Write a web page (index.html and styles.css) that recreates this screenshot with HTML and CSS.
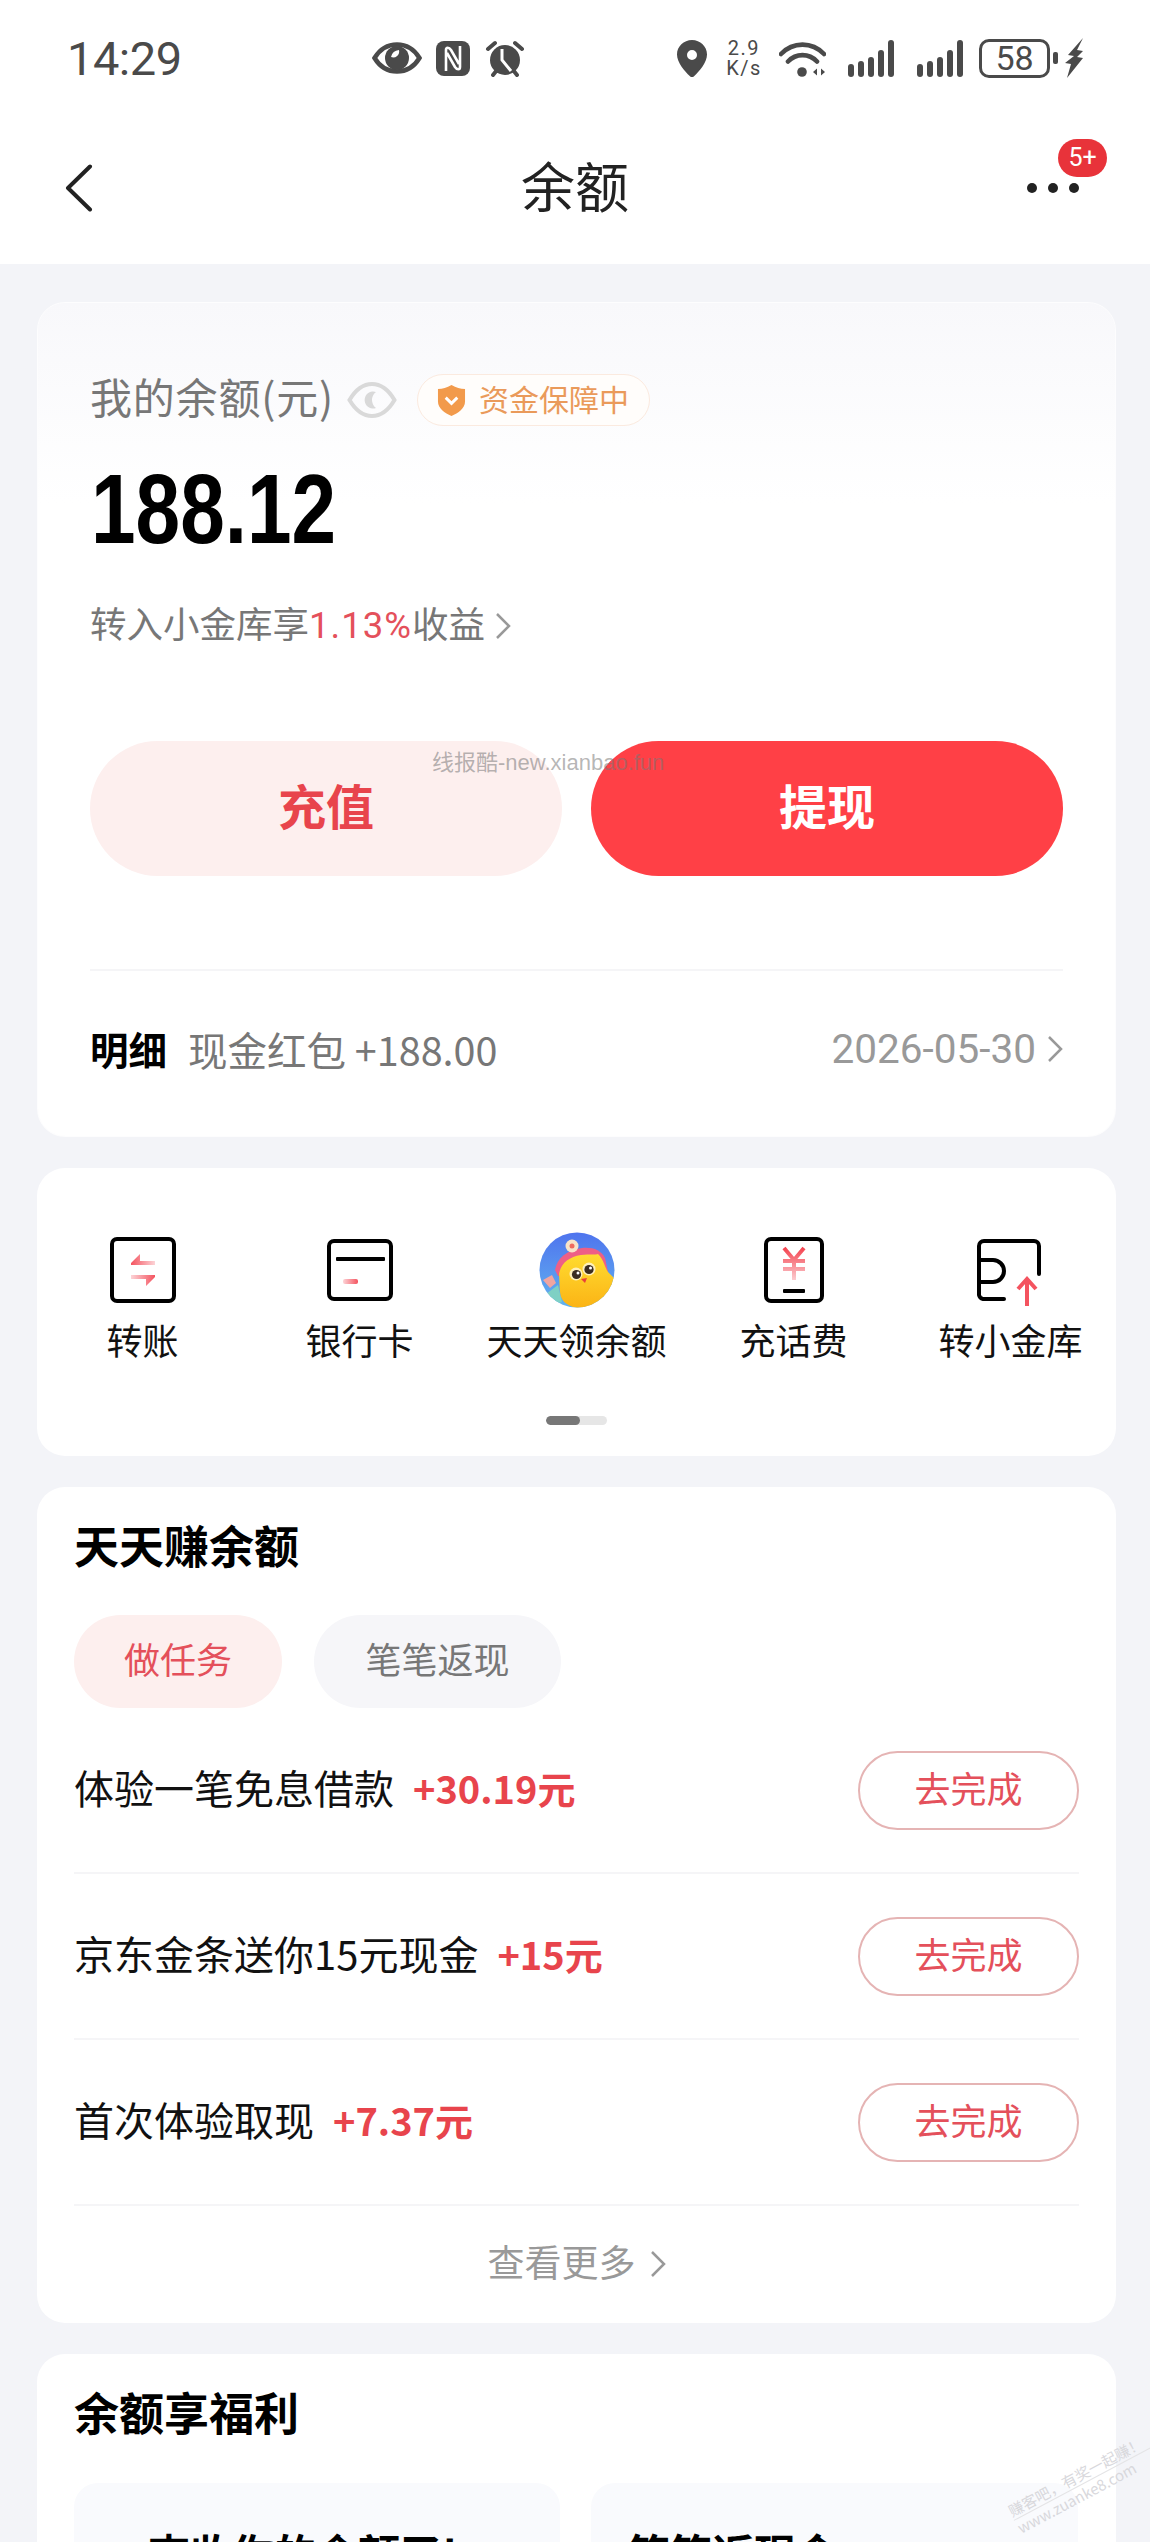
FILE: index.html
```html
<!DOCTYPE html>
<html lang="zh-CN">
<head>
<meta charset="utf-8">
<title>余额</title>
<link rel="stylesheet" href="styles.css">
</head>
<body>
<div class="page">
  <header class="top">
    <div class="status">
      <span class="time">14:29</span>
      <div class="st-left">
        <svg class="i-eye" viewBox="0 0 50 32"><path d="M2.5 16C8 7 15.5 2.5 25 2.5S42 7 47.5 16C42 25 34.500 29.500 25 29.500S8 25 2.500 16Z" fill="none" stroke="#4a4a4a" stroke-width="4.500"/><circle cx="25" cy="16" r="12" fill="#4a4a4a"/><path d="M19 15a6 6 0 0 0 8 -7a9 9 0 0 0 -8 7Z" fill="#fff"/></svg>
        <svg class="i-nfc" viewBox="0 0 34 35"><rect width="34" height="35" rx="8" fill="#4a4a4a"/><path d="M10 30V9c0-3 3-3 5 0l8 14M24 5v21c0 3-3 3-5 0l-8-14" fill="none" stroke="#fff" stroke-width="2.600"/></svg>
        <svg class="i-alarm" viewBox="0 0 40 37"><path d="M3 9l7-6M37 9l-7-6M8 35l4-5M32 35l-4-5" stroke="#4a4a4a" stroke-width="4" stroke-linecap="round"/><circle cx="20" cy="20" r="15" fill="#4a4a4a"/><path d="M17 9v11l9 11" fill="none" stroke="#fff" stroke-width="3"/></svg>
      </div>
      <div class="st-right">
        <svg class="i-pin" viewBox="0 0 30 37"><path fill-rule="evenodd" d="M15 0c8.300 0 15 6.500 15 14.500 0 8-7.500 16.500-13 21.800a3 3 0 0 1-4 0C7.500 31 0 22.500 0 14.500 0 6.500 6.700 0 15 0Zm0 10a5 5 0 1 0 0 10 5 5 0 0 0 0-10Z" fill="#4a4a4a"/></svg>
        <div class="speed"><span>2.9</span><span>K/s</span></div>
        <svg class="i-wifi" viewBox="0 0 47 37"><path d="M2 14C14 1.500 33 1.500 45 14M9 21.500C17 13 30 13 38 21.500" fill="none" stroke="#4a4a4a" stroke-width="4.600" stroke-linecap="round"/><circle cx="23" cy="32" r="4.800" fill="#4a4a4a"/><path d="M34 32l4-3.500v7ZM42 28.500l4 3.500-4 3.500Z" fill="#4a4a4a"/></svg>
        <svg class="i-sig" viewBox="0 0 47 37"><g fill="#4a4a4a"><rect x="0" y="24" width="6" height="13" rx="3"/><rect x="10" y="21" width="6" height="16" rx="3"/><rect x="20" y="17" width="6" height="20" rx="3"/><rect x="30" y="10" width="6" height="27" rx="3"/><rect x="40" y="0" width="6" height="37" rx="3"/></g></svg>
        <svg class="i-sig i-sig2" viewBox="0 0 47 37"><g fill="#4a4a4a"><rect x="0" y="24" width="6" height="13" rx="3"/><rect x="10" y="21" width="6" height="16" rx="3"/><rect x="20" y="17" width="6" height="20" rx="3"/><rect x="30" y="10" width="6" height="27" rx="3"/><rect x="40" y="0" width="6" height="37" rx="3"/></g></svg>
        <div class="batt">58</div>
        <span class="nub"></span>
        <svg class="i-bolt" viewBox="0 0 18 40"><path d="M18 0L3 17l6 1-9 7 6 1L2 40 18 20l-6-1 6-6-6-1Z" fill="#4a4a4a"/></svg>
      </div>
    </div>
    <nav class="nav">
      <svg class="i-back" viewBox="0 0 28 48"><path d="M25 2.500L3 24l22 21.500" fill="none" stroke="#222" stroke-width="4" stroke-linecap="round" stroke-linejoin="round"/></svg>
      <h1 class="nav-title">余额</h1>
      <div class="more">
        <span class="dot"></span><span class="dot"></span><span class="dot"></span>
        <span class="badge">5+</span>
      </div>
    </nav>
  </header>

  <main class="main">
    <section class="card balance">
      <div class="bal-head">
        <span class="bal-label">我的余额(元)</span>
        <svg class="i-seye" viewBox="0 0 50 38"><path d="M2.500 19C9 8 16 3 25 3s16 5 22.500 16C41 30 34 35 25 35S9 30 2.500 19Z" fill="none" stroke="#d9d9d9" stroke-width="4"/><path d="M29 11a8.500 8.500 0 1 0 0 16 10 10 0 0 1 0-16Z" fill="#d9d9d9"/></svg>
        <div class="safe">
          <svg class="i-shield" viewBox="0 0 30 32"><path d="M1 4c5 0 9-1 14-4 5 3 9 4 14 4v13c0 7-7 12-14 15C8 29 1 24 1 17Z" fill="#f29a4b"/><path d="M9 13l6 6 6-6" fill="none" stroke="#fff" stroke-width="3"/></svg>
          <span>资金保障中</span>
        </div>
      </div>
      <div class="amount">188.12</div>
      <div class="promo"><span class="promo-t">转入小金库享<em>1.13%</em>收益</span><svg class="i-chev" viewBox="0 0 16 28"><path d="M2 2l12 12L2 26" fill="none" stroke="#999" stroke-width="2.500"/></svg></div>
      <div class="actions">
        <button class="act act-light">充值</button>
        <button class="act act-red">提现</button>
      </div>
      <div class="detail">
        <div class="detail-l"><b>明细</b><span>现金红包 +188.00</span></div>
        <div class="detail-r">2026-05-30<svg class="i-chev" viewBox="0 0 16 28"><path d="M2 2l12 12L2 26" fill="none" stroke="#999" stroke-width="2.500"/></svg></div>
      </div>
    </section>

    <section class="card tools">
      <div class="tool-row">
        <div class="tool">
          <svg class="t-ic" viewBox="0 0 80 80"><defs><linearGradient id="ga" x1="1" x2="0" y1="0" y2="0"><stop offset="0" stop-color="#f4535f" stop-opacity=".25"/><stop offset="1" stop-color="#f4535f"/></linearGradient><linearGradient id="gb" x1="0" x2="1" y1="0" y2="0"><stop offset="0" stop-color="#f4535f" stop-opacity=".25"/><stop offset="1" stop-color="#f4535f"/></linearGradient></defs><rect x="9" y="9" width="62" height="62" rx="5" fill="none" stroke="#000" stroke-width="4"/><path d="M28 33l9-9v7h15v4H28Z" fill="url(#ga)"/><path d="M52 47l-9 9v-7H28v-4h24Z" fill="url(#gb)"/></svg>
          <span>转账</span>
        </div>
        <div class="tool">
          <svg class="t-ic" viewBox="0 0 80 80"><rect x="9" y="11" width="62" height="58" rx="5" fill="none" stroke="#000" stroke-width="4"/><rect x="16" y="27" width="49" height="4" rx="1" fill="#000"/><rect x="23" y="49" width="15" height="5" rx="2" fill="url(#gb)"/></svg>
          <span>银行卡</span>
        </div>
        <div class="tool">
          <svg class="t-ic" viewBox="0 0 80 80"><defs><linearGradient id="gd" x1="0" x2="0" y1="0" y2="1"><stop offset="0" stop-color="#4f74ee"/><stop offset="1" stop-color="#62b4ef"/></linearGradient><linearGradient id="gy" x1="0" x2="0" y1="0" y2="1"><stop offset="0" stop-color="#ffdc30"/><stop offset="1" stop-color="#fbb315"/></linearGradient><clipPath id="gc"><circle cx="40" cy="40" r="37.500"/></clipPath></defs><circle cx="40" cy="40" r="37.500" fill="url(#gd)"/><g clip-path="url(#gc)"><path d="M6 50l9-5 4 8-6 5Z" fill="#f1a5a0"/><path d="M9 64l12-9 4 17-8 2Z" fill="#7ed0c4"/><path d="M18 40C20 28 30 20 45 18c11-1 19 2 23 10l3 14-50 4Z" fill="#ee5f86"/><circle cx="35" cy="16" r="6.500" fill="#f8e3c8"/><circle cx="35" cy="16" r="2.500" fill="#ef6a5e"/><path d="M22 44C24 33 32 27 44 25c9-1 15 0 17-1 6 6 7 14 10 18l8 8-14 21c-6 5-15 8-24 7-7-1-13-4-16-9-3-6-2-13-3-25Z" fill="url(#gy)"/><circle cx="39" cy="44" r="6.500" fill="#fff0b8"/><circle cx="39.500" cy="44.500" r="4.600" fill="#3b2c22"/><circle cx="52" cy="39" r="6.500" fill="#fff0b8"/><circle cx="52" cy="39.500" r="4.600" fill="#3b2c22"/><circle cx="41" cy="43" r="1.500" fill="#fff"/><circle cx="53.500" cy="38" r="1.500" fill="#fff"/><path d="M44 49l6-1-2 5Z" fill="#e8413a"/></g></svg>
          <span>天天领余额</span>
        </div>
        <div class="tool">
          <svg class="t-ic" viewBox="0 0 80 80"><defs><linearGradient id="gv" x1="0" x2="0" y1="0" y2="1"><stop offset="0" stop-color="#f4434f"/><stop offset="1" stop-color="#f4535f" stop-opacity=".3"/></linearGradient></defs><rect x="12" y="9" width="56" height="62" rx="5" fill="none" stroke="#000" stroke-width="4"/><path d="M30 18l10 12 10-12M29 31h22M29 39h22M40 30v20" fill="none" stroke="url(#gv)" stroke-width="4"/><rect x="29" y="59" width="22" height="4" rx="1" fill="#000"/></svg>
          <span>充话费</span>
        </div>
        <div class="tool">
          <svg class="t-ic" viewBox="0 0 80 80"><path d="M33 69H12a5 5 0 0 1-4-4V16a5 5 0 0 1 5-5h50a5 5 0 0 1 5 5v28" fill="none" stroke="#000" stroke-width="4" stroke-linecap="round"/><path d="M8 30h14a11 11 0 0 1 0 22H8" fill="none" stroke="#000" stroke-width="4"/><path d="M56 76V50M47 59l9-10 9 10" fill="none" stroke="#f4535f" stroke-width="4"/></svg>
          <span>转小金库</span>
        </div>
      </div>
      <div class="pager"><span></span></div>
    </section>

    <section class="card earn">
      <h2 class="sec-title">天天赚余额</h2>
      <div class="tabs">
        <span class="tab tab-on">做任务</span>
        <span class="tab tab-off">笔笔返现</span>
      </div>
      <div class="task"><div class="task-l">体验一笔免息借款<b>+30.19元</b></div><span class="go">去完成</span></div>
      <div class="task"><div class="task-l">京东金条送你15元现金<b>+15元</b></div><span class="go">去完成</span></div>
      <div class="task"><div class="task-l">首次体验取现<b>+7.37元</b></div><span class="go">去完成</span></div>
      <div class="see-more"><span>查看更多</span><svg class="i-chev" viewBox="0 0 16 28"><path d="M2 2l12 12L2 26" fill="none" stroke="#999" stroke-width="2.500"/></svg></div>
    </section>

    <section class="card perks">
      <h2 class="sec-title">余额享福利</h2>
      <div class="perk-grid">
        <div class="perk perk-a">查收你的余额了!</div>
        <div class="perk perk-b">笔笔返现金</div>
      </div>
    </section>
  </main>

  <div class="wm-a">线报酷-new.xianbao.fun</div>
  <div class="wm-b"><span>赚客吧，有奖一起赚！</span><i></i><span>www.zuanke8.com</span></div>
</div>
</body>
</html>
```
FILE: styles.css
```css
* { box-sizing: border-box; }
html, body { margin: 0; padding: 0; }
body {
  font-family: "Noto Sans CJK SC", "Noto Sans", sans-serif;
  background: #f3f4f8;
  color: #000;
}
.page { position: relative; width: 1150px; height: 2542px; overflow: hidden; }

/* header */
.top { background: #fff; height: 264px; }
.status { height: 116px; display: flex; align-items: center; padding-left: 67px; color: #4a4a4a; }
.time { font-family: Roboto, sans-serif; font-size: 47px; width: 115px; letter-spacing: -.5px; color: #4a4a4a; white-space: nowrap; }
.st-left { display: flex; align-items: center; margin-left: 190px; }
.i-eye { width: 50px; height: 32px; }
.i-nfc { width: 34px; height: 35px; margin-left: 14px; }
.i-alarm { width: 40px; height: 37px; margin-left: 15px; }
.st-right { display: flex; align-items: center; margin-left: 152px; }
.i-pin { width: 30px; height: 37px; }
.speed { display: flex; flex-direction: column; width: 38px; margin-left: 18px; font-family: Roboto, sans-serif; font-size: 20px; letter-spacing: 1.500px; line-height: 20px; align-items: center; }
.i-wifi { width: 47px; height: 37px; margin-left: 16px; }
.i-sig { width: 47px; height: 37px; margin-left: 22px; }
.i-sig2 { margin-left: 22px; }
.batt { width: 71px; height: 39px; margin-left: 15px; border: 3px solid #4a4a4a; border-radius: 10px; font-family: Roboto, sans-serif; font-size: 34px; line-height: 33px; text-align: center; }
.nub { width: 5px; height: 12px; margin-left: 3px; background: #4a4a4a; border-radius: 2px; }
.i-bolt { width: 18px; height: 40px; margin-left: 7px; }

.nav { position: relative; height: 148px; display: flex; align-items: center; justify-content: space-between; padding: 0 71px 4px 65px; }
.i-back { width: 28px; height: 48px; }
.nav-title { margin: 0; font-size: 54px; line-height: 60px; font-weight: 400; color: #222; position: absolute; left: 0; right: 0; text-align: center; top: 39px; }
.more { position: relative; display: flex; gap: 11px; align-self: center; }
.dot { width: 10px; height: 10px; border-radius: 50%; background: #222; }
.badge { position: absolute; right: -28px; top: -44px; width: 49px; height: 38px; border-radius: 19px; background: #e8333a; color: #fff; font-family: Roboto, sans-serif; font-size: 25px; line-height: 38px; text-align: center; }

/* cards */
.main { padding: 38px 34px 0 37px; display: flex; flex-direction: column; gap: 31px; }
.card { width: 1079px; border-radius: 28px; background: #fff; }

.balance { height: 835px; padding: 71px 52px 0 52px; background: linear-gradient(#f8f8fb, #fff 200px); border: 1px solid #fdfdfe; }
.bal-head { display: flex; align-items: center; height: 52px; }
.bal-label { font-size: 42px; letter-spacing: .8px; line-height: 44px; padding-bottom: 8px; color: #777; white-space: nowrap; }
.i-seye { width: 50px; height: 38px; margin-left: 13px; }
.safe { display: flex; align-items: center; width: 233px; height: 52px; margin-left: 20px; padding-left: 19px; border: 1.5px solid #fbeadf; border-radius: 26px; background: #fffdfb; color: #ea9a5a; font-size: 30px; white-space: nowrap; }
.safe span { line-height: 40px; padding-bottom: 4px; }
.i-shield { width: 29px; height: 31px; margin-right: 13px; }
.amount { margin-top: 33px; height: 100px; font-family: "Liberation Sans", Arial, sans-serif; font-weight: 700; font-size: 99px; line-height: 100px; color: #000; transform: scaleX(.81); transform-origin: 5px 0; }
.promo { display: flex; align-items: center; margin-top: 42px; height: 50px; font-size: 36.500px; color: #777; white-space: nowrap; }
.promo-t { line-height: 46px; padding-bottom: 3px; }
.promo em { font-style: normal; font-family: Roboto, sans-serif; color: #e4505b; letter-spacing: 1px; }
.i-chev { width: 16px; height: 28px; margin-left: 10px; }
.actions { display: flex; gap: 29px; margin-top: 90px; }
.act { flex: 1; height: 135px; border: 0; border-radius: 68px; padding: 0 0 10px; font-family: inherit; font-size: 48px; font-weight: 700; }
.act-light { background: #fdefee; color: #e8444c; }
.act-red { background: #ff4046; color: #fff; }
.detail { display: flex; justify-content: space-between; align-items: center; margin-top: 93px; padding-top: 50px; border-top: 2px solid #f5f5f7; height: 112px; }
.detail-l { display: flex; align-items: center; height: 60px; padding-bottom: 6px; }
.detail-l b { font-size: 38.500px; font-weight: 700; color: #000; }
.detail-l span { margin-left: 21px; font-size: 39.500px; color: #777; white-space: nowrap; }
.detail-r { display: flex; align-items: center; height: 60px; font-size: 40.500px; font-family: Roboto, sans-serif; color: #999; padding-bottom: 4px; white-space: nowrap; }
.detail-r .i-chev { margin-left: 11px; }

.tools { height: 288px; padding-top: 62px; overflow: hidden; }
.tool-row { display: grid; grid-template-columns: repeat(5, 217px); justify-content: center; }
.tool { display: flex; flex-direction: column; align-items: center; }
.tool span { margin-top: 4px; padding-bottom: 3px; font-size: 36px; line-height: 50px; color: #111; white-space: nowrap; }
.t-ic { width: 80px; height: 80px; }
.pager { width: 61px; height: 9px; margin: 49px auto 0; background: #e6e6e6; border-radius: 5px; overflow: hidden; }
.pager span { display: block; width: 34px; height: 9px; background: #777; border-radius: 5px; }

.earn { height: 836px; padding: 28px 37px 0; }
.sec-title { margin: 0; font-size: 45px; line-height: 60px; font-weight: 700; color: #000; }
.tabs { display: flex; gap: 32px; margin-top: 40px; }
.tab { height: 93px; border-radius: 47px; font-size: 36px; line-height: 87px; text-align: center; }
.tab-on { width: 208px; background: #fdefee; color: #e4505b; }
.tab-off { width: 247px; background: #f6f6f9; color: #777; }
.task { display: flex; justify-content: space-between; align-items: center; height: 166px; padding-top: 1px; border-bottom: 2px solid #f5f5f7; }
.task-l { font-size: 40px; color: #111; white-space: nowrap; padding-bottom: 8px; }
.task-l b { margin-left: 19px; color: #e8444c; font-weight: 700; font-size: 38px; }
.go { width: 221px; height: 79px; border: 2px solid #e5b4b4; border-radius: 40px; font-size: 36px; line-height: 68px; text-align: center; color: #e4505b; }
.see-more { display: flex; justify-content: center; align-items: center; height: 117px; font-size: 37px; color: #999; padding-bottom: 2px; }
.see-more span { padding-bottom: 5px; }
.see-more .i-chev { margin-left: 14px; }

.perks { height: 400px; padding: 28px 37px 0; }
.perk-grid { display: grid; grid-template-columns: 486px 487px; gap: 31px; margin-top: 41px; }
.perk { height: 300px; border-radius: 24px; background: #f9fafd; font-size: 42px; line-height: 50px; font-weight: 700; padding-top: 44px; white-space: nowrap; }
.perk-a { padding-left: 74px; }
.perk-b { padding-left: 37px; }

/* watermarks over the picture */
.wm-a { position: absolute; left: 432px; top: 749px; font-size: 22px; line-height: 28px; color: rgba(120,120,120,.55); white-space: nowrap; font-family: "Liberation Sans", "Noto Sans CJK SC", sans-serif; }
.wm-b { position: absolute; left: 1004px; top: 2462px; width: 170px; font-size: 15px; line-height: 18px; color: #d8d8dc; transform: rotate(-28deg); display: flex; flex-direction: column; white-space: nowrap; }
.wm-b i { display: block; height: 1px; background: #e4e4e6; }
```
